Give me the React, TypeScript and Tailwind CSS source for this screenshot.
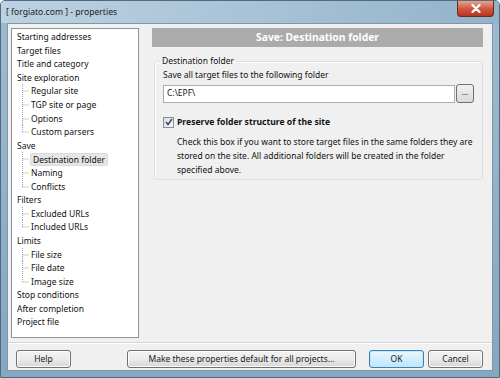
import React from "react";

const F = { fontFamily: '"Noto Sans", "Open Sans", sans-serif' };

type Item = { label: string; child?: boolean; last?: boolean; selected?: boolean };

const items: Item[] = [
  { label: "Starting addresses" },
  { label: "Target files" },
  { label: "Title and category" },
  { label: "Site exploration" },
  { label: "Regular site", child: true },
  { label: "TGP site or page", child: true },
  { label: "Options", child: true },
  { label: "Custom parsers", child: true, last: true },
  { label: "Save" },
  { label: "Destination folder", child: true, selected: true },
  { label: "Naming", child: true },
  { label: "Conflicts", child: true, last: true },
  { label: "Filters" },
  { label: "Excluded URLs", child: true },
  { label: "Included URLs", child: true, last: true },
  { label: "Limits" },
  { label: "File size", child: true },
  { label: "File date", child: true },
  { label: "Image size", child: true, last: true },
  { label: "Stop conditions" },
  { label: "After completion" },
  { label: "Project file" },
];

function Connector({ last }: { last?: boolean }) {
  return (
    <svg width="14" height="13.6" className="shrink-0" viewBox="0 0 14 13.6">
      <line x1="5.5" y1="0" x2="5.5" y2={last ? 7 : 13.6} stroke="#a0a0a0" strokeWidth="1" strokeDasharray="1 1" />
      <line x1="5.5" y1="7" x2="12" y2="7" stroke="#a0a0a0" strokeWidth="1" strokeDasharray="1 1" />
    </svg>
  );
}

function Btn({ children, w, primary }: { children: React.ReactNode; w: string; primary?: boolean }) {
  return (
    <div
      className={`${w} h-[18px] rounded-[3px] border flex items-center justify-center text-[8.5px] text-[#1a1a1a] ${
        primary
          ? "border-[#3c7fb1] bg-gradient-to-b from-[#eaf6fd] to-[#bee6fd] shadow-[inset_0_0_0_1px_#c4e8fb]"
          : "border-[#707070] bg-gradient-to-b from-[#f2f2f2] via-[#ebebeb] to-[#d6d6d6] shadow-[inset_0_0_0_1px_#fcfcfc]"
      }`}
    >
      {children}
    </div>
  );
}

export default function App() {
  return (
    <div style={F} className="w-[500px] h-[378px] flex flex-col bg-gradient-to-b from-[#9fbbd0] to-[#86a7c0] border border-[#4f6b80] rounded-t-[5px] overflow-hidden">
      {/* Title bar */}
      <div className="h-[22px] flex items-start shrink-0 bg-gradient-to-r from-[#bcd2e2] via-[#a9c2d6] to-[#93b3ca]">
        <div className="pl-[5px] pt-[4px] text-[8.6px] text-[#1b1b1b] leading-[14px]">[ forgiato.com ] - properties</div>
        <div className="ml-auto mr-[5px] w-[37px] h-[16px] rounded-b-[4px] border border-t-0 border-[#6b2a20] bg-gradient-to-b from-[#e6a58f] via-[#cf5a44] to-[#b8321f] flex items-center justify-center">
          <svg width="10" height="9" viewBox="0 0 10 9">
            <path d="M1.5 1 L8.5 8 M8.5 1 L1.5 8" stroke="#ffffff" strokeWidth="2.2" strokeLinecap="round" />
          </svg>
        </div>
      </div>

      {/* Client */}
      <div className="flex-1 mx-[6px] mb-[6px] bg-[#f0f0f0] border border-[#7d97ab] flex flex-col">
        <div className="flex pt-[4px] pl-[3px] pr-[9px] h-[315px]">
          {/* Tree */}
          <div className="w-[128px] h-[310px] bg-white border border-[#8e9399] pt-[1px] pl-[5px] text-[8.5px] text-[#111]">
            {items.map((it) => (
              <div key={it.label} className="h-[13.6px] flex items-center leading-[13.6px]">
                {it.child && (
                  <div className="flex">
                    <Connector last={it.last} />
                  </div>
                )}
                <span
                  className={`whitespace-nowrap ${
                    it.selected ? "bg-[#e6e6e6] border border-[#d9d9d9] rounded-[2px] px-[2px] -ml-[1px] leading-[11px]" : ""
                  }`}
                >
                  {it.label}
                </span>
              </div>
            ))}
          </div>

          {/* Right panel */}
          <div className="flex-1 ml-[13px] flex flex-col">
            <div className="h-[19px] bg-[#ababab] flex items-center justify-center text-white font-bold text-[10.3px]">
              Save: Destination folder
            </div>
            <fieldset className="mt-[8px] ml-[2px] border border-[#d5dfe5] rounded-[3px] pl-[8px] pr-[8px] pb-[2px] shadow-[inset_1px_1px_0_#ffffff] text-[8.5px] text-[#111]">
              <legend className="ml-[-3px] px-[2px] leading-[12px]">Destination folder</legend>
              <div className="leading-[14px] mt-[1px]">Save all target files to the following folder</div>
              <div className="flex items-center mt-[2px]">
                <div className="flex-1 h-[18px] bg-white border border-[#abadb3] flex items-center pl-[3px]">C:\EPF\</div>
                <div className="ml-[1px] w-[18px] h-[19px] rounded-[3px] border border-[#707070] bg-gradient-to-b from-[#f2f2f2] to-[#d8d8d8] flex items-center justify-center text-[8px] leading-none pb-[3px]">...</div>
              </div>
              <div className="flex items-center mt-[12px]">
                <div className="w-[11px] h-[11px] border border-[#8e8f8f] bg-gradient-to-br from-[#dcdcdc] to-[#f8f8f8] flex items-center justify-center">
                  <svg width="8" height="8" viewBox="0 0 8 8">
                    <path d="M1 4 L3 6.5 L7 1" fill="none" stroke="#2a4a7a" strokeWidth="1.5" />
                  </svg>
                </div>
                <div className="ml-[3px] font-bold text-[8.6px] leading-[14px]">Preserve folder structure of the site</div>
              </div>
              <div className="pl-[14px] mt-[6px] leading-[14px] whitespace-nowrap">
                <div>Check this box if you want to store target files in the same folders they are</div>
                <div>stored on the site. All additional folders will be created in the folder</div>
                <div>specified above.</div>
              </div>
            </fieldset>
          </div>
        </div>

        {/* Separator */}
        <div className="mt-[3px] border-t border-[#d5d5d5] border-b border-b-white" />

        {/* Buttons */}
        <div className="flex items-center mt-[6px] pl-[8px] pr-[9px]">
          <Btn w="w-[55px]">Help</Btn>
          <div className="w-[56px]" />
          <Btn w="w-[229px]">Make these properties default for all projects...</Btn>
          <div className="w-[13px]" />
          <Btn w="w-[55px]" primary>OK</Btn>
          <div className="w-[4px]" />
          <Btn w="w-[55px]">Cancel</Btn>
        </div>
      </div>
    </div>
  );
}
